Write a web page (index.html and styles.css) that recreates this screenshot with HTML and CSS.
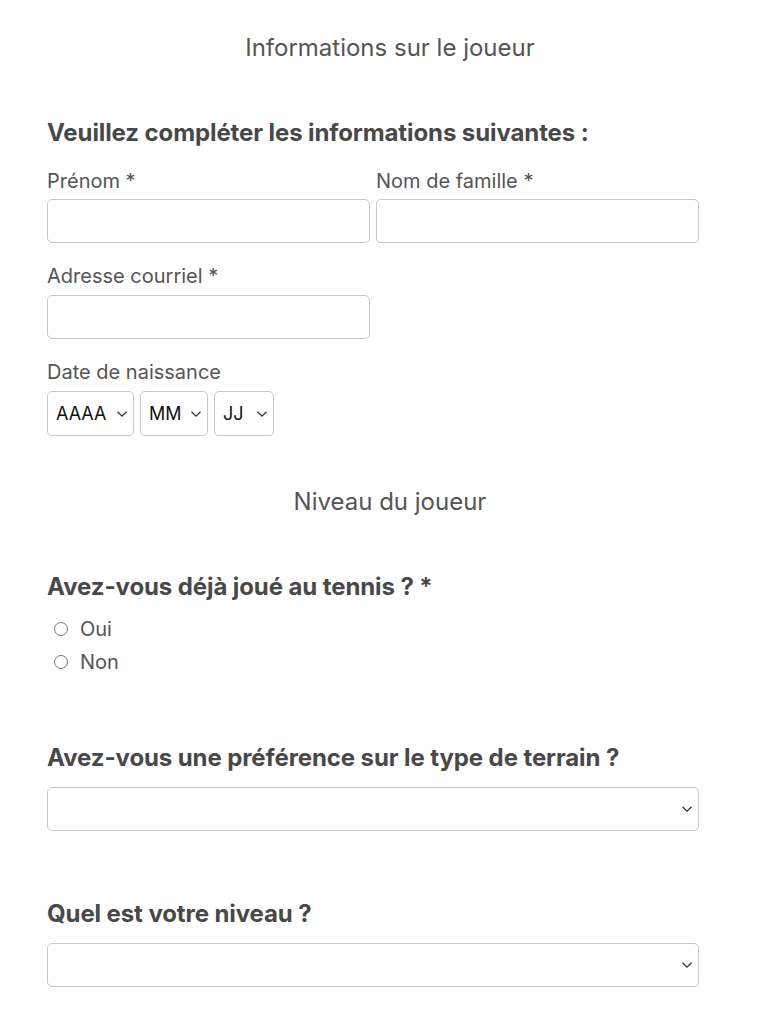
FILE: index.html
```html
<!DOCTYPE html>
<html lang="fr">
<head>
    <meta charset="utf-8">
    <title>Inscription tennis</title>
    <link rel="stylesheet" href="styles.css">
</head>
<body>
    <form class="form">
        <h2 class="section-title">Informations sur le joueur</h2>

        <h3 class="question">Veuillez compléter les informations suivantes :</h3>
        <div class="row first">
            <div class="field">
                <label for="prenom">Prénom *</label>
                <input type="text" id="prenom">
            </div>
            <div class="field">
                <label for="nom">Nom de famille *</label>
                <input type="text" id="nom">
            </div>
        </div>
        <div class="row">
            <div class="field">
                <label for="courriel">Adresse courriel *</label>
                <input type="email" id="courriel">
            </div>
        </div>
        <div class="row">
            <div class="field">
                <label>Date de naissance</label>
                <div class="date">
                    <div class="select small year">
                        <select><option>AAAA</option></select>
                        <svg class="chev" viewBox="0 0 12 8"><path d="M1.5 1.8 6 6.2 10.5 1.8"/></svg>
                    </div>
                    <div class="select small month">
                        <select><option>MM</option></select>
                        <svg class="chev" viewBox="0 0 12 8"><path d="M1.5 1.8 6 6.2 10.5 1.8"/></svg>
                    </div>
                    <div class="select small day">
                        <select><option>JJ</option></select>
                        <svg class="chev" viewBox="0 0 12 8"><path d="M1.5 1.8 6 6.2 10.5 1.8"/></svg>
                    </div>
                </div>
            </div>
        </div>

        <h2 class="section-title second">Niveau du joueur</h2>

        <h3 class="question">Avez-vous déjà joué au tennis ? *</h3>
        <div class="radios">
            <label class="radio"><input type="radio" name="joue"> Oui</label>
            <label class="radio"><input type="radio" name="joue"> Non</label>
        </div>

        <h3 class="question spaced">Avez-vous une préférence sur le type de terrain ?</h3>
        <div class="select wide">
            <select><option></option></select>
            <svg class="chev" viewBox="0 0 12 8"><path d="M1.5 1.8 6 6.2 10.5 1.8"/></svg>
        </div>

        <h3 class="question after-select">Quel est votre niveau ?</h3>
        <div class="select wide">
            <select><option></option></select>
            <svg class="chev" viewBox="0 0 12 8"><path d="M1.5 1.8 6 6.2 10.5 1.8"/></svg>
        </div>
    </form>
</body>
</html>
```

FILE: styles.css
```css
body {
    margin: 0;
    background: #fff;
    color: #555;
    font-family: Inter, "Liberation Sans", Arial, sans-serif;
}
.form {
    width: 686px;
    padding: 33px 0 40px 47px;
}
.section-title {
    margin: 0;
    font-size: 24px;
    line-height: 30px;
    font-weight: 400;
    text-align: center;
    color: #555;
}
.section-title.second {
    margin-top: 51px;
}
.question {
    margin: 56px 0 0;
    font-size: 24px;
    line-height: 28px;
    font-weight: 700;
    letter-spacing: -0.1px;
    color: #484848;
}
.question.spaced {
    margin-top: 66px;
}
.question.after-select {
    margin-top: 69px;
}
.row {
    display: flex;
    gap: 6px;
}
.field {
    display: flex;
    flex-direction: column;
    width: 323px;
}
.field label {
    font-size: 20px;
    line-height: 24px;
    margin: 21px 0 7px;
}
.row.first .field label {
    margin-top: 22px;
    margin-bottom: 6px;
}
input[type=text],
input[type=email] {
    box-sizing: border-box;
    height: 44px;
    width: 100%;
    border: 1px solid #c8c8c8;
    border-radius: 5px;
    padding: 0 10px;
    font-size: 16px;
    margin: 0;
}
.date {
    display: flex;
    gap: 6px;
}
.select {
    position: relative;
}
.select select {
    appearance: none;
    -webkit-appearance: none;
    box-sizing: border-box;
    width: 100%;
    height: 44px;
    margin: 0;
    border: 1px solid #c8c8c8;
    border-radius: 5px;
    background: #fff;
    color: #111;
    font-family: Inter, "Liberation Sans", Arial, sans-serif;
    font-size: 18px;
    padding: 0 8px;
}
.select.small select {
    height: 45px;
}
.select.year { width: 87px; }
.select.month { width: 68px; }
.select.day { width: 60px; }
.select.wide {
    margin-top: 15px;
    width: 652px;
}
.chev {
    position: absolute;
    top: 50%;
    right: 6px;
    width: 12px;
    height: 8px;
    margin-top: -4px;
    fill: none;
    stroke: #333;
    stroke-width: 1.3;
    pointer-events: none;
}
.radios {
    display: flex;
    flex-direction: column;
    margin-top: 11px;
}
.radio {
    display: flex;
    align-items: center;
    height: 33px;
    font-size: 20px;
    color: #555;
}
.radio input {
    appearance: none;
    -webkit-appearance: none;
    width: 14px;
    height: 14px;
    margin: 0 12px 0 7px;
    border: 1px solid #777;
    border-radius: 50%;
}
```
